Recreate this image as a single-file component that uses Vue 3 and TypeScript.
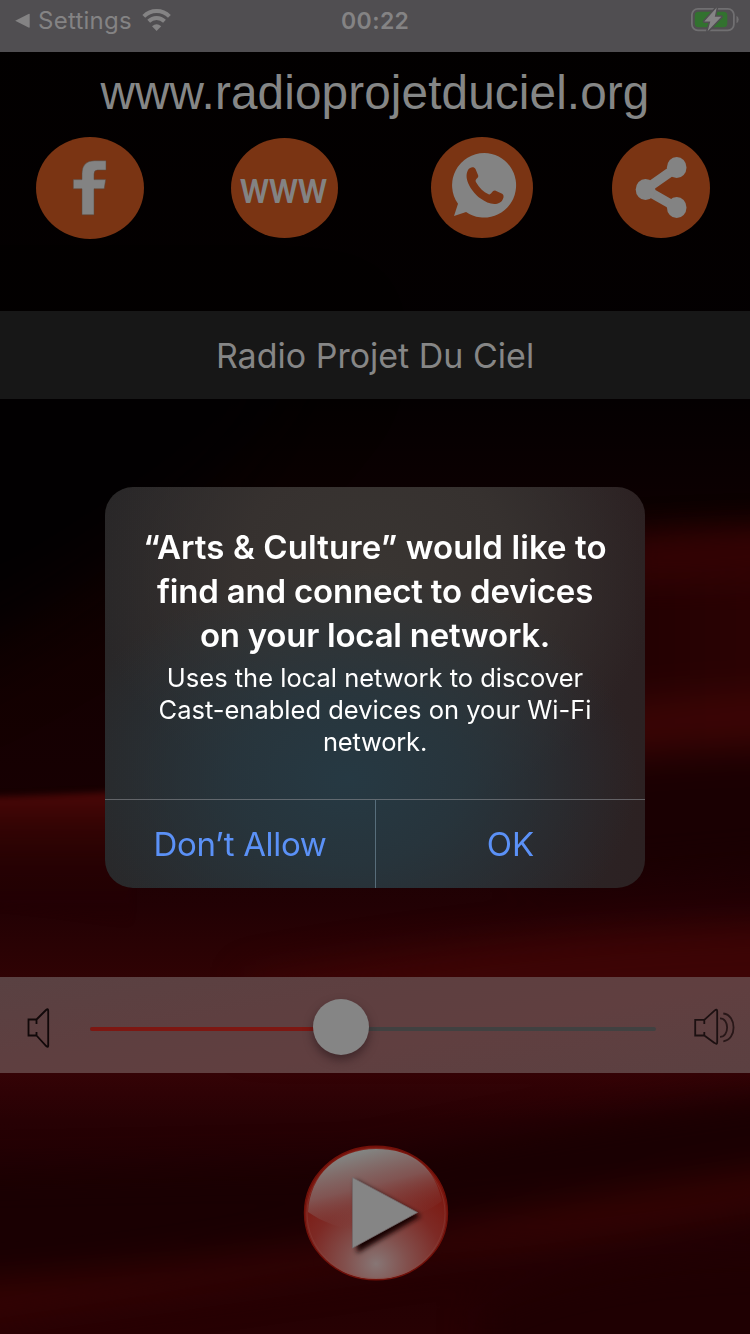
<script setup lang="ts">
import { ref } from 'vue'

const site = 'www.radioprojetduciel.org'
const station = 'Radio Projet Du Ciel'
const volume = ref(44.3)
const titleLines: string[] = ['“Arts & Culture” would like to', 'find and connect to devices', 'on your local network.']
const messageLines: string[] = ['Uses the local network to discover', 'Cast-enabled devices on your Wi-Fi', 'network.']
</script>

<template>
  <main class="screen">
    <svg class="backdrop" viewBox="0 0 750 1334" preserveAspectRatio="none" aria-hidden="true">
      <defs>
        <linearGradient id="base" x1="0" y1="0" x2="0" y2="1">
          <stop offset="0" stop-color="#020000" />
          <stop offset=".3" stop-color="#040001" />
          <stop offset=".42" stop-color="#100001" />
          <stop offset=".6" stop-color="#170002" />
          <stop offset=".68" stop-color="#220104" />
          <stop offset=".74" stop-color="#310304" />
          <stop offset=".8" stop-color="#360306" />
          <stop offset=".84" stop-color="#270104" />
          <stop offset=".9" stop-color="#1d0003" />
          <stop offset="1" stop-color="#270103" />
        </linearGradient>
        <linearGradient id="glow" x1="0" y1="0" x2="0" y2="1">
          <stop offset="0" stop-color="#4b0707" />
          <stop offset=".25" stop-color="#350404" />
          <stop offset="1" stop-color="#230103" stop-opacity="0" />
        </linearGradient>
        <linearGradient id="fade" x1="0" y1="0" x2="1" y2="0">
          <stop offset="0" stop-color="#2a0203" stop-opacity="0" />
          <stop offset=".65" stop-color="#230102" />
          <stop offset="1" stop-color="#310304" />
        </linearGradient>
        <filter id="b3" x="-20%" y="-50%" width="140%" height="200%" color-interpolation-filters="sRGB"><feGaussianBlur stdDeviation="3" /></filter>
        <filter id="b16" x="-20%" y="-60%" width="140%" height="220%" color-interpolation-filters="sRGB"><feGaussianBlur stdDeviation="18" /></filter>
        <filter id="b40" x="-40%" y="-60%" width="180%" height="220%" color-interpolation-filters="sRGB"><feGaussianBlur stdDeviation="40" /></filter>
      </defs>
      <rect width="750" height="1334" fill="url(#base)" />
      <path d="M-90 340H330Q180 560-90 680z" fill="#020001" filter="url(#b40)" />
      <g filter="url(#b16)">
        <path d="M240 590 Q520 535 850 535 V755 Q590 758 410 800 H240z" fill="url(#fade)" />
        <path d="M540 720 Q650 690 850 690 V730 Q650 750 540 760z" fill="#430707" opacity=".75" />
        <path d="M530 785 Q650 750 850 755 V855 Q650 870 530 880z" fill="#1a0002" />
        <path d="M250 980 Q550 925 850 925 V1040H250z" fill="#3d0405" />
        <path d="M-80 1175 Q180 1170 360 1165 Q570 1120 850 1085 V1155 Q520 1200 330 1232 Q130 1270-80 1280z" fill="#1a0002" />
        <path d="M-80 1290 Q250 1265 440 1230 Q620 1190 850 1160 V1195 Q610 1240 420 1260 Q210 1290-80 1330z" fill="#390404" opacity=".85" />
        <path d="M480 1310 Q610 1250 850 1260 V1400H480z" fill="#1f0002" />
      </g>
      <path d="M-20 797 Q60 795 130 791 V925 Q50 910-20 905z" fill="url(#glow)" filter="url(#b3)" />
      <path d="M620 540 Q700 530 850 530 V570 Q700 580 620 580z" fill="#350304" filter="url(#b16)" />
    </svg>

    <header class="status">
      <svg class="back" viewBox="0 0 16 16"><path d="M.2 7.8 13.5 1q1.2-.5 1.2.6V14q0 1-1.2.6z" fill="#848384" /></svg>
      <span class="back-label">Settings</span>
      <svg class="wifi" viewBox="0 0 30 24">
        <path d="M1.8 8.3a18.2 18.2 0 0 1 25.6 0M6.7 13.2a11.3 11.3 0 0 1 15.8 0" fill="none" stroke="#848384" stroke-width="4" />
        <path d="M14.6 23 10 18.2q4.6-4 9.2 0z" fill="#848384" />
      </svg>
      <time class="clock">00:22</time>
      <svg class="battery" viewBox="0 0 50 26">
        <rect x="1.9" y="1.8" width="42" height="21.5" rx="6" fill="none" stroke="#706f71" stroke-width="1.8" />
        <path d="M46.5 8.7q2.2 1.2 2.2 3.8t-2.2 3.8z" fill="#706f71" />
        <rect x="4.8" y="4.8" width="32.5" height="15.4" rx="3.7" fill="#32722f" />
        <path d="m26.7.5-12.4 14h6L17.6 24.2 31.3 9.8h-6.5z" fill="#858485" stroke="#504e51" stroke-width="3" paint-order="stroke" stroke-linejoin="round" />
      </svg>
    </header>

    <section class="contact">
      <h1 class="site">{{ site }}</h1>
      <nav class="links">
        <svg class="facebook" width="108" height="102" viewBox="0 0 108 102">
          <ellipse cx="54" cy="51" rx="54" ry="51" fill="#7a3413" />
          <path d="M70 23.7V33h-8.3q-3.7 0-3.7 4v5.6h11.7l-1.5 9.2H58v26H46v-26h-8.7v-9.2H46v-6q0-12.9 12.7-12.9z" fill="#838383" stroke="#59493f" stroke-width=".5" />
        </svg>
        <svg class="web" width="107" height="100" viewBox="0 0 107 100">
          <ellipse cx="53.5" cy="50" rx="53.5" ry="50" fill="#7a3413" />
          <text x="9" y="65" textLength="87" lengthAdjust="spacingAndGlyphs">www</text>
        </svg>
        <svg class="chat" width="102" height="101" viewBox="0 0 102 101">
          <ellipse cx="51" cy="50.5" rx="51" ry="50.5" fill="#7a3413" />
          <path d="M53.3 16a32 32.3 0 1 1-18.2 59L23 79l4-12.2A32.2 32.2 0 0 1 53.3 16z" fill="#838383" />
          <path d="M37 33c2.3-3.5 6.3-3.3 7.5-1l2.7 6.5c.7 2.5-3.7 3.6-2.3 6.4 3.2 6 7.5 9.8 12.7 12.3 2.6 1.2 3.3-4 6.5-3.8l7 3.4c2.9 1.5 1 6.2-1 8-5.7 4.4-13.6 1.9-20.9-3.5C42 55.7 31.8 43 37 33z" fill="#7a3413" />
        </svg>
        <svg class="share" width="98" height="100" viewBox="0 0 98 100">
          <ellipse cx="49" cy="50" rx="49" ry="50" fill="#7a3413" />
          <path d="M64.7 29.5 33.2 51.5 64.7 69.5" fill="none" stroke="#838383" stroke-width="9.5" />
          <g fill="#838383"><ellipse cx="64.7" cy="29.5" rx="9.8" ry="10.6" /><ellipse cx="33.5" cy="51.5" rx="9.8" ry="10.6" /><ellipse cx="64.7" cy="69.5" rx="9.8" ry="10.6" /></g>
        </svg>
      </nav>
    </section>

    <h2 class="station">{{ station }}</h2>

    <section class="volume">
      <svg class="quiet" viewBox="0 0 24 42"><path d="M9.5 17v-4.5h-8v16h8V25M9.5 12.5 19 3q2.2-1.7 2.2.4v35.4q0 2-2 .2L9.5 28.5" fill="none" stroke="#110809" stroke-width="1.8" /></svg>
      <div class="slider">
        <div class="track"><div class="filled" :style="{ width: volume + '%' }"></div></div>
        <div class="knob" :style="{ left: volume + '%' }"></div>
      </div>
      <svg class="loud" viewBox="0 0 44 42">
        <path d="M11.3 17v-4.2H2.2v15.7h9.1V25M11.3 12.8 21.5 3.6q2.7-2 2.7.5v31.2q0 2.7-2.7.6l-10.2-7.4" fill="none" stroke="#1c1011" stroke-width="1.8" />
        <path d="M27 11.3c9.5 0 9.5 18.5 0 18.5M30.3 6.5c13.7 1.5 13.7 26.5 0 27.8" fill="none" stroke="#281718" stroke-width="1.8" />
      </svg>
    </section>

    <section class="player">
      <svg class="play" viewBox="0 0 146 136">
        <defs>
          <radialGradient id="orb" cx=".5" cy=".88" r=".72">
            <stop offset="0" stop-color="#877675" />
            <stop offset=".3" stop-color="#82504d" />
            <stop offset=".65" stop-color="#7d2a25" />
            <stop offset="1" stop-color="#7c170f" />
          </radialGradient>
          <linearGradient id="gloss" gradientUnits="userSpaceOnUse" x1="60" y1="4" x2="80" y2="84">
            <stop offset="0" stop-color="#838d8b" stop-opacity=".95" />
            <stop offset=".45" stop-color="#826261" stop-opacity=".8" />
            <stop offset="1" stop-color="#80302c" stop-opacity="0" />
          </linearGradient>
          <filter id="shadow" x="-20%" y="-20%" width="150%" height="150%"><feGaussianBlur stdDeviation="2.4" /></filter>
        </defs>
        <ellipse cx="73" cy="68" rx="71.5" ry="66.8" fill="url(#orb)" stroke="#721009" stroke-width="1.4" />
        <ellipse cx="73" cy="68.5" rx="69" ry="65" fill="none" stroke="#914840" stroke-width="1" opacity=".4" />
        <path d="M5 67C7 30 34 4 73 4s59 20 66 52C118 72 92 74 78 82 49 89 24 80 5 67z" fill="url(#gloss)" />
        <path d="m52 35 66 36-64 37z" fill="#160203" filter="url(#shadow)" />
        <path d="m49.5 32.5 65 35-65 35.5z" fill="#858585" stroke="#73696b" stroke-width=".8" />
      </svg>
    </section>

    <div class="alert" role="alertdialog">
      <div class="copy">
        <div class="alert-title"><span v-for="(line, i) in titleLines" :key="line" :class="'t' + i">{{ line }}</span></div>
        <div class="message"><span v-for="(line, i) in messageLines" :key="line" :class="'m' + i">{{ line }}</span></div>
      </div>
      <div class="actions"><button class="deny">Don’t Allow</button><button class="allow">OK</button></div>
    </div>
  </main>
</template>

<style>
html, body { background: #050001; }
</style>

<style scoped>
.screen { position: relative; isolation: isolate; display: flex; flex-direction: column; width: 750px; height: 1334px; overflow: hidden; background: #080001; font-family: Inter, "Liberation Sans", sans-serif; }
svg { display: block; flex: none; }
h1, h2 { margin: 0; font-weight: 400; }
.backdrop { position: absolute; inset: 0; z-index: -1; width: 750px; height: 1334px; }
.status { display: grid; grid-template-columns: 38px 104px 199px 70px 1fr 60px; align-items: start; height: 52px; flex: none; box-sizing: border-box; background: #504e51; color: #848384; }
.back { width: 16px; height: 16px; margin: 13px 0 0 15px; }
.back-label { font-size: 24px; line-height: 30px; margin-top: 6px; letter-spacing: .25px; white-space: nowrap; }
.wifi { width: 30px; height: 24px; margin-top: 8px; }
.clock { font-size: 23px; font-weight: 600; line-height: 30px; margin-top: 6px; letter-spacing: .4px; }
.battery { grid-column: 6; width: 50px; height: 26px; margin-top: 7px; }
.contact { height: 259px; flex: none; }
.site { height: 85px; line-height: 81px; text-align: center; white-space: nowrap; font-family: "Liberation Sans", Arial, sans-serif; font-size: 47.7px; letter-spacing: .12px; color: #858686; }
.links { display: flex; align-items: flex-start; padding-left: 36px; }
.web { margin: 1px 0 0 87px; overflow: visible; }
.web text { font-family: Lato, sans-serif; font-weight: 700; font-size: 46.5px; fill: #838383; }
.chat { margin-left: 93px; }
.share { margin: 1px 0 0 79px; }
.station { height: 88px; flex: none; line-height: 89px; text-align: center; background: #171717; color: #868686; font-size: 34px; }
.volume { display: flex; align-items: flex-start; height: 96px; flex: none; box-sizing: border-box; margin-top: 578px; background: linear-gradient(170deg, #594142, #5e3f40 35%, #603f40 60%, #5b4041); }
.quiet { width: 24px; height: 42px; margin: 30px 39px 0 27px; }
.slider { position: relative; width: 566px; height: 96px; flex: none; }
.track { height: 4px; margin-top: 50px; overflow: hidden; border-radius: 2px; background: #414141; }
.filled { height: 4px; background: #7d1712; }
.knob { position: absolute; top: 22px; width: 56px; height: 56px; margin-left: -28px; border-radius: 50%; background: #858585; box-shadow: 0 5px 10px #1d101480; }
.loud { width: 44px; height: 42px; margin: 30px 0 0 37px; }
.player { flex: 1; display: flex; justify-content: center; padding-top: 72px; }
.play { width: 146px; height: 136px; margin-left: 2px; }
.alert { position: absolute; left: 105px; top: 487px; width: 540px; height: 401px; display: flex; flex-direction: column; overflow: hidden; border-radius: 28px; color: #fff; text-align: center; background: radial-gradient(ellipse 290px 210px at 45% 73%, #263943 0, #263740d0 40%, #27343c00 100%), radial-gradient(ellipse 280px 240px at 50% 22%, #393532 0, #36312f 50%, #2d292900 100%), linear-gradient(90deg, #292728, #2b292b 50%, #2c2122); }
.copy { height: 312px; flex: none; padding-top: 38px; box-sizing: border-box; }
.copy span { display: block; white-space: nowrap; }
.alert-title { font-size: 33px; font-weight: 600; line-height: 44px; }
.t0 { letter-spacing: .1px; }
.t1 { letter-spacing: -.19px; }
.t2 { letter-spacing: -.24px; }
.message { font-size: 25.5px; line-height: 32px; margin-top: 5px; }
.m2 { letter-spacing: -.2px; }
.actions { display: grid; grid-template-columns: 1fr 1fr; height: 89px; box-sizing: border-box; border-top: 1px solid #8a8b9198; }
button { border: 0; padding: 0; background: none; color: #5b91f7; font: 400 33px/88px Inter, sans-serif; height: 88px; }
.deny { letter-spacing: -.32px; }
.allow { border-left: 1px solid #7891a29c; }
</style>
